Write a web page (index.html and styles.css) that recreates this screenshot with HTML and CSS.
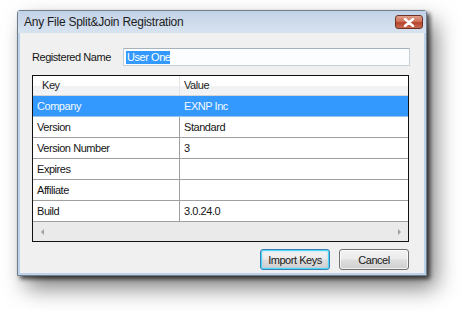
FILE: index.html
```html
<!DOCTYPE html>
<html>
<head>
<meta charset="utf-8">
<link rel="stylesheet" href="styles.css">
</head>
<body>
<div class="window">
  <div class="titlebar">
    <span class="title">Any File Split&amp;Join Registration</span>
    <div class="close">
      <svg width="12" height="9" viewBox="0 0 12 9"><path d="M2 1 L10 8 M10 1 L2 8" stroke="#ffffff" stroke-width="2.4" stroke-linecap="round"/></svg>
    </div>
  </div>
  <div class="client">
    <div class="name-row">
      <span class="label">Registered Name</span>
      <div class="textbox"><span class="sel">User One</span></div>
    </div>
    <div class="listview">
      <div class="lv-header">
        <div class="hcol hkey">Key</div>
        <div class="hcol hval">Value</div>
      </div>
      <div class="row selected"><div class="cell key">Company</div><div class="cell val">EXNP Inc</div></div>
      <div class="row"><div class="cell key">Version</div><div class="cell val">Standard</div></div>
      <div class="row"><div class="cell key">Version Number</div><div class="cell val">3</div></div>
      <div class="row"><div class="cell key">Expires</div><div class="cell val"></div></div>
      <div class="row"><div class="cell key">Affiliate</div><div class="cell val"></div></div>
      <div class="row"><div class="cell key">Build</div><div class="cell val">3.0.24.0</div></div>
      <div class="hscroll"><span class="arr left"></span><span class="arr right"></span></div>
    </div>
    <div class="buttons">
      <div class="btn default">Import Keys</div>
      <div class="btn">Cancel</div>
    </div>
  </div>
</div>
</body>
</html>
```
FILE: styles.css
```css
html, body {
  margin: 0;
  background: #ffffff;
}
body {
  min-height: 311px;
  box-sizing: border-box;
  padding: 10px 0 0 17px;
  font-family: "Liberation Sans", Arial, sans-serif;
  font-size: 11px;
  letter-spacing: -0.45px;
  color: #151515;
}
.window {
  width: 404px;
  border: 1px solid #6f7e8e;
  border-radius: 3px 3px 0 0;
  background: #bcd3ea;
  padding: 0 2px 2px 2px;
  box-shadow: 3px 3px 4px rgba(0,0,0,0.65), 9px 12px 22px rgba(0,0,0,0.5);
}
.titlebar {
  margin: 0 -2px;
  height: 22px;
  display: flex;
  align-items: flex-start;
  justify-content: space-between;
  background: linear-gradient(#c2d2e7, #d8e3f0);
  padding: 0 3px 0 6px;
}
.title {
  font-size: 12px;
  letter-spacing: -0.25px;
  line-height: 22px;
  color: #1c1c1c;
}
.close {
  margin-top: 4px;
  width: 26px;
  height: 12px;
  border: 1px solid #6b3328;
  border-radius: 3px;
  background: linear-gradient(#e0a08c 0%, #cf7259 45%, #b8442d 55%, #c86a52 100%);
  display: flex;
  align-items: center;
  justify-content: center;
}
.client {
  width: 404px;
  height: 240px;
  box-sizing: border-box;
  background: #f0f0f0;
  padding: 15px 14px 3px 12px;
  display: flex;
  flex-direction: column;
}
.name-row {
  display: flex;
  align-items: center;
  height: 18px;
}
.label {
  width: 91px;
  flex: none;
}
.textbox {
  flex: 1;
  height: 18px;
  box-sizing: border-box;
  border: 1px solid #c5cdd6;
  border-top-color: #a8b2bd;
  background: #fbfdfe;
  padding: 1px 2px;
  display: flex;
  align-items: center;
}
.sel {
  background: #3399ff;
  color: #ffffff;
  line-height: 13px;
  padding: 0 0 0 1px;
}
.listview {
  margin-top: 9px;
  margin-right: 1px;
  height: 167px;
  box-sizing: border-box;
  border: 1px solid #111111;
  background: #ffffff;
  display: flex;
  flex-direction: column;
}
.lv-header {
  height: 20px;
  box-sizing: border-box;
  display: flex;
  background: linear-gradient(#ffffff 0%, #ffffff 50%, #f1f2f4 55%, #f3f4f6 100%);
  border-bottom: 1px solid #d5d5d5;
}
.hcol {
  line-height: 19px;
  color: #222;
}
.hkey {
  width: 147px;
  box-sizing: border-box;
  padding-left: 9px;
  border-right: 1px solid #e2e3e5;
}
.hval {
  padding-left: 4px;
}
.row {
  height: 21px;
  box-sizing: border-box;
  display: flex;
  border-bottom: 1px solid #a0a0a0;
}
.cell {
  line-height: 20px;
  padding-left: 4px;
  box-sizing: border-box;
}
.cell.key {
  width: 147px;
  border-right: 1px solid #a0a0a0;
}
.cell.val { flex: 1; }
.row.selected {
  background: #3399ff;
  color: #f4f9ff;
  border-bottom-color: #9cc3ea;
}
.row.selected .cell.key { border-right-color: #3399ff; }
.hscroll {
  flex: 1;
  background: #eaeaea;
  display: flex;
  align-items: center;
  justify-content: space-between;
  padding: 0 7px 0 8px;
}
.arr {
  width: 0;
  height: 0;
  border-top: 3px solid transparent;
  border-bottom: 3px solid transparent;
}
.arr.left { border-right: 3px solid #a0a0a0; }
.arr.right { border-left: 3px solid #a0a0a0; }
.buttons {
  margin-top: 7px;
  margin-right: 1px;
  display: flex;
  justify-content: flex-end;
  gap: 9px;
}
.btn {
  width: 70px;
  height: 21px;
  box-sizing: border-box;
  border: 1px solid #707070;
  border-radius: 3px;
  background: linear-gradient(#f3f3f3 0%, #ebebeb 48%, #dddddd 52%, #cfcfcf 100%);
  box-shadow: inset 0 0 0 1px rgba(255,255,255,0.7);
  display: flex;
  align-items: center;
  justify-content: center;
  color: #1a1a1a;
}
.btn.default {
  border-color: #3c7fb1;
  box-shadow: inset 0 0 0 1px #48d8fb, inset 0 0 2px 1px rgba(120,200,240,0.6);
}
```
